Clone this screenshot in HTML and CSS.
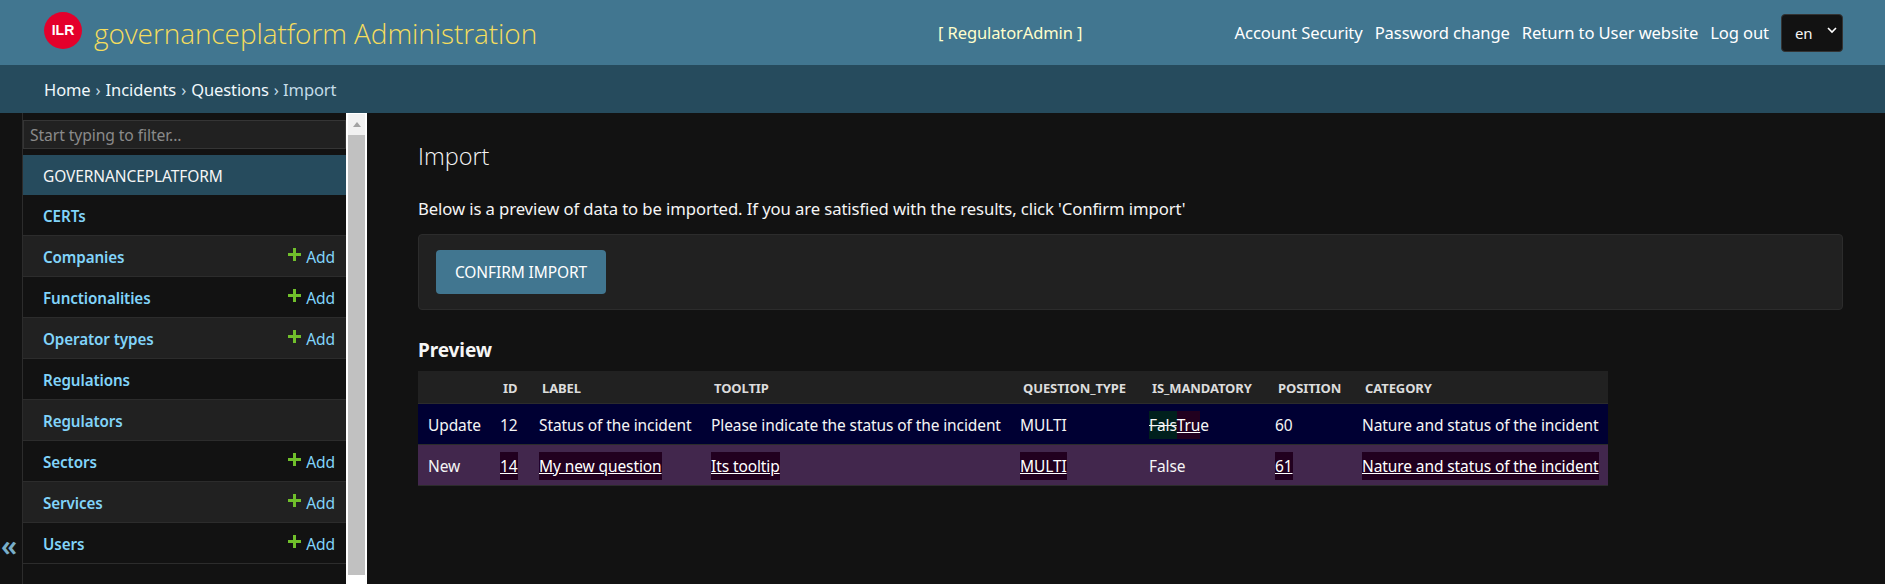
FILE: index.html
```html
<!DOCTYPE html>
<html lang="en">
<head>
<meta charset="utf-8">
<title>Import | governanceplatform Administration</title>
<link rel="stylesheet" href="styles.css">
</head>
<body>
<header class="header">
  <div class="brand">
    <span class="logo">ILR</span>
    <h1 class="title">governanceplatform Administration</h1>
  </div>
  <div class="role">[ RegulatorAdmin ]</div>
  <nav class="tools">
    <a href="#">Account Security</a>
    <a href="#">Password change</a>
    <a href="#">Return to User website</a>
    <a href="#">Log out</a>
    <div class="lang"><span>en</span>
      <svg class="chev" width="10" height="7" viewBox="0 0 10 7"><path d="M1 1l4 4 4-4" fill="none" stroke="#fff" stroke-width="1.6"/></svg>
    </div>
  </nav>
</header>
<div class="crumbs"><a href="#">Home</a> › <a href="#">Incidents</a> › <a href="#">Questions</a> › Import</div>
<div class="body">
  <div class="toggle">«</div>
  <aside class="side">
    <div class="filter">Start typing to filter...</div>
    <div class="app-caption">GOVERNANCEPLATFORM</div>
    <div class="row"><a class="model" href="#">CERTs</a></div>
    <div class="row alt"><a class="model" href="#">Companies</a><a class="add" href="#"><svg class="plus" viewBox="0 0 13 13"><path d="M5 0h3v5h5v3H8v5H5V8H0V5h5z"/></svg>Add</a></div>
    <div class="row"><a class="model" href="#">Functionalities</a><a class="add" href="#"><svg class="plus" viewBox="0 0 13 13"><path d="M5 0h3v5h5v3H8v5H5V8H0V5h5z"/></svg>Add</a></div>
    <div class="row alt"><a class="model" href="#">Operator types</a><a class="add" href="#"><svg class="plus" viewBox="0 0 13 13"><path d="M5 0h3v5h5v3H8v5H5V8H0V5h5z"/></svg>Add</a></div>
    <div class="row"><a class="model" href="#">Regulations</a></div>
    <div class="row alt"><a class="model" href="#">Regulators</a></div>
    <div class="row"><a class="model" href="#">Sectors</a><a class="add" href="#"><svg class="plus" viewBox="0 0 13 13"><path d="M5 0h3v5h5v3H8v5H5V8H0V5h5z"/></svg>Add</a></div>
    <div class="row alt"><a class="model" href="#">Services</a><a class="add" href="#"><svg class="plus" viewBox="0 0 13 13"><path d="M5 0h3v5h5v3H8v5H5V8H0V5h5z"/></svg>Add</a></div>
    <div class="row"><a class="model" href="#">Users</a><a class="add" href="#"><svg class="plus" viewBox="0 0 13 13"><path d="M5 0h3v5h5v3H8v5H5V8H0V5h5z"/></svg>Add</a></div>
  </aside>
  <div class="scrollbar">
    <div class="arrow"></div>
    <div class="thumb"></div>
  </div>
  <main class="main">
    <h2 class="page-title">Import</h2>
    <p class="intro">Below is a preview of data to be imported. If you are satisfied with the results, click 'Confirm import'</p>
    <div class="submit-box"><button class="confirm">CONFIRM IMPORT</button></div>
    <h3 class="preview-title">Preview</h3>
    <table class="preview">
      <colgroup>
        <col class="c1"><col class="c2"><col class="c3"><col class="c4"><col class="c5"><col class="c6"><col class="c7"><col class="c8">
      </colgroup>
      <thead>
        <tr><th></th><th>ID</th><th>LABEL</th><th>TOOLTIP</th><th>QUESTION_TYPE</th><th>IS_MANDATORY</th><th>POSITION</th><th>CATEGORY</th></tr>
      </thead>
      <tbody>
        <tr class="update">
          <td>Update</td><td>12</td><td>Status of the incident</td><td>Please indicate the status of the incident</td><td>MULTI</td>
          <td><del>Fals</del><ins class="dark">Tru</ins>e</td><td>60</td><td>Nature and status of the incident</td>
        </tr>
        <tr class="new">
          <td>New</td><td><ins>14</ins></td><td><ins>My new question</ins></td><td><ins>Its tooltip</ins></td><td><ins>MULTI</ins></td>
          <td>False</td><td><ins>61</ins></td><td><ins>Nature and status of the incident</ins></td>
        </tr>
      </tbody>
    </table>
  </main>
</div>
</body>
</html>
```
FILE: styles.css
```css
* { box-sizing: border-box; }
html, body { margin: 0; height: 584px; overflow: hidden; }
body {
  background: #121212;
  color: #f5f5f5;
  font-family: "Noto Sans", "Open Sans", sans-serif;
  font-size: 15.5px;
  letter-spacing: -0.1px;
}
a { color: inherit; text-decoration: none; }

.header {
  height: 65px;
  background: #417690;
  padding: 0 42px 0 44px;
  display: flex;
  align-items: center;
  color: #fff;
}
.brand { display: flex; align-items: center; width: 894px; }
.logo {
  width: 38px;
  height: 37px;
  border-radius: 50%;
  background: #e4002b;
  color: #fff;
  font-family: "Liberation Sans", sans-serif;
  font-size: 14px;
  font-weight: 700;
  letter-spacing: 0;
  display: flex;
  align-items: center;
  justify-content: center;
  margin-top: -5px;
}
.title {
  margin: 0 0 0 12px;
  font-family: "Open Sans", sans-serif;
  font-size: 28px;
  font-weight: 300;
  letter-spacing: -0.08px;
  color: #f5dd5d;
  white-space: nowrap;
}
.role { color: #ffffcc; font-size: 16.5px; white-space: nowrap; }
.tools { display: flex; align-items: center; gap: 12px; font-size: 16.6px; margin-left: auto; white-space: nowrap; }
.lang {
  width: 62px;
  height: 38px;
  background: #121212;
  border: 1px solid #333;
  border-radius: 4px;
  display: flex;
  align-items: center;
  padding-left: 13px;
  gap: 14px;
  font-size: 15px;
  color: #f5f5f5;
}
.chev { margin-top: -5px; }

.crumbs {
  height: 48px;
  background: #264b5d;
  padding-left: 44px;
  display: flex;
  align-items: center;
  gap: 5px;
  color: #c4dce8;
  font-size: 16.5px;
}
.crumbs a { color: #f0f8fc; }

.body { display: flex; height: 471px; }
.toggle {
  width: 23px;
  flex: none;
  border-right: 1px solid #2c2c2c;
  color: #79aec8;
  font-size: 28px;
  font-weight: 600;
  padding: 417px 0 0 1px;
  line-height: 30px;
}
.side { width: 323px; flex: none; padding-top: 7px; overflow: hidden; }
.filter {
  height: 29px;
  background: #212121;
  border: 1px solid #353535;
  color: #8a8a8a;
  padding: 0 5px 0 6px;
  font-size: 15.7px;
  line-height: 28px;
  margin-bottom: 6px;
}
.app-caption {
  height: 40px;
  background: #264b5d;
  color: #f5f5f5;
  padding-left: 20px;
  line-height: 42px;
}
.row {
  height: 41px;
  display: flex;
  align-items: center;
  justify-content: space-between;
  padding: 2px 11px 0 20px;
  border-bottom: 1px solid #2c2c2c;
  color: #81d4fa;
}
.row.alt { background: #212121; }
.model { font-weight: 600; font-size: 15.2px; color: #81d4fa; }
.add { display: flex; align-items: center; gap: 5px; color: #81d4fa; font-size: 15.6px; }
.plus { width: 13px; height: 13px; fill: #70bf2b; margin-top: -6px; margin-left: -1px; }

.scrollbar {
  width: 21px;
  flex: none;
  background: #fff;
  padding: 1px 2px 0;
}
.arrow {
  width: 17px;
  height: 21px;
  background: #f1f1f1;
  display: flex;
  justify-content: center;
  align-items: center;
}
.arrow::before {
  content: "";
  border-left: 4px solid transparent;
  border-right: 4px solid transparent;
  border-bottom: 5px solid #a3a3a3;
}
.thumb { height: 440px; background: #c1c1c1; }

.main { flex: 1; min-width: 0; padding: 27px 42px 0 51px; }
.page-title { margin: 0; font-family: "Open Sans", sans-serif; font-size: 23.5px; font-weight: 300; line-height: 32px; color: #f5f5f5; letter-spacing: 0; }
.intro { margin: 26px 0 0; line-height: 22px; font-size: 16.7px; color: #f5f5f5; }
.submit-box {
  margin-top: 14px;
  height: 76px;
  background: #212121;
  border: 1px solid #2c2c2c;
  border-radius: 4px;
  padding: 15px 17px;
}
.confirm {
  width: 170px;
  height: 44px;
  background: #417690;
  color: #fff;
  border: 0;
  border-radius: 4px;
  font: inherit;
  font-size: 15.5px;
  letter-spacing: -0.1px;
}
.preview-title { margin: 27px 0 0; font-size: 19px; font-weight: 700; line-height: 26px; color: #f5f5f5; }
.preview { margin-top: 8px; border-collapse: collapse; table-layout: fixed; width: 1190px; }
.c1 { width: 72px; } .c2 { width: 39px; } .c3 { width: 172px; } .c4 { width: 309px; }
.c5 { width: 129px; } .c6 { width: 126px; } .c7 { width: 87px; } .c8 { width: 256px; }
.preview th {
  height: 32px;
  background: #212121;
  color: #dcdcdc;
  font-size: 13px;
  font-weight: 700;
  text-align: left;
  padding: 2px 0 0 13px;
  border-bottom: 1px solid #2c2c2c;
  white-space: nowrap;
}
.preview td {
  height: 41px;
  padding: 3px 0 0 10px;
  font-size: 15.5px;
  color: #f5f5f5;
  white-space: nowrap;
  border-bottom: 1px solid #2c2c2c;
}
.update td { background: #000033; }
.new td { background: #42274d; }
ins { background: #21001f; color: #fff; text-decoration: underline; padding: 3px 0; }
ins.dark { background: #21001f; }
del { background: #00201d; color: #f5f5f5; text-decoration: line-through; padding: 3px 0; }
```
